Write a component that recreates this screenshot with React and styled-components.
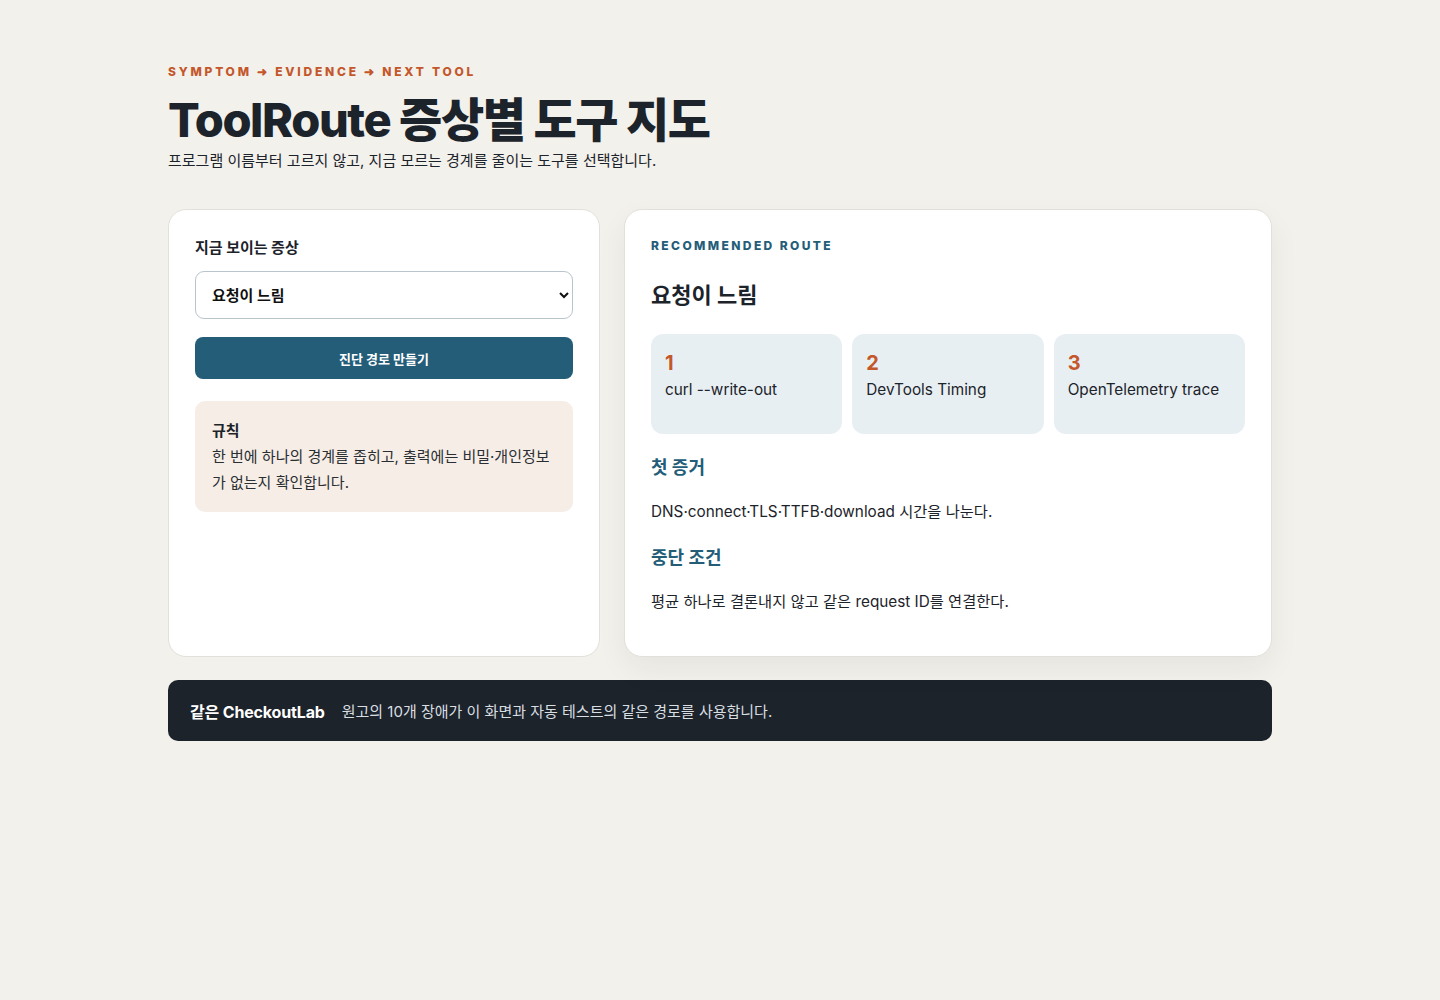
import React, { useState } from 'react';
import styled, { createGlobalStyle } from 'styled-components';

const GlobalStyle = createGlobalStyle`
  html, body {
    margin: 0;
    padding: 0;
    background: #f2f1ec;
  }
  body {
    font-family: Inter, "Noto Sans CJK KR", "Noto Sans", sans-serif;
    color: #1c232a;
  }
  * { box-sizing: border-box; }
`;

const Page = styled.main`
  max-width: 1104px;
  margin: 0 auto;
  padding: 63px 0 80px;
`;

const Eyebrow = styled.div`
  font-size: 12px;
  font-weight: 800;
  letter-spacing: ${(p) => p.spacing || '0.2em'};
  color: ${(p) => p.color || '#c4572a'};
  line-height: 18px;
  text-transform: uppercase;
`;

const Title = styled.h1`
  margin: 9px 0 0;
  font-size: 47px;
  font-weight: 800;
  letter-spacing: -0.03em;
  line-height: 60px;
`;

const Lead = styled.p`
  margin: 0;
  font-size: 15px;
  line-height: 22px;
  color: #1c232a;
`;

const Grid = styled.div`
  display: grid;
  grid-template-columns: 2fr 3fr;
  gap: 24px;
  margin-top: 37px;
`;

const Card = styled.section`
  background: #fff;
  border: 1px solid #e2e0da;
  border-radius: 18px;
  padding: ${(p) => (p.raised ? '27px 26px 26px' : '26px')};
  box-shadow: ${(p) => (p.raised ? '0 12px 30px rgba(28, 35, 42, 0.06)' : 'none')};
  min-height: 448px;
`;

const Label = styled.label`
  display: block;
  font-size: 15px;
  font-weight: 700;
  line-height: 24px;
  margin-bottom: 11px;
`;

const Select = styled.select`
  width: 100%;
  height: 48px;
  border: 1px solid #b9c5cc;
  border-radius: 9px;
  background: #fff;
  padding: 0 12px;
  font-family: inherit;
  font-size: 15px;
  font-weight: 700;
  color: #111;
`;

const Button = styled.button`
  display: block;
  width: 100%;
  height: 42px;
  margin-top: 18px;
  border: 0;
  border-radius: 8px;
  background: #245d78;
  color: #fff;
  font-family: inherit;
  font-size: 13px;
  font-weight: 700;
  cursor: pointer;
`;

const RuleBox = styled.div`
  margin-top: 22px;
  background: #f6ede6;
  border-radius: 10px;
  padding: 17px 17px 16px;
  font-size: 15px;
  line-height: 26px;
  color: #2a2f33;
`;

const RuleTitle = styled.strong`
  display: block;
  font-weight: 700;
  color: #1c232a;
`;

const RouteTitle = styled.h2`
  margin: 23px 0 0;
  font-size: 22px;
  font-weight: 700;
  line-height: 34px;
`;

const Steps = styled.div`
  display: grid;
  grid-template-columns: repeat(3, 1fr);
  gap: 10px;
  margin-top: 22px;
`;

const Step = styled.div`
  background: #e8eff3;
  border-radius: 12px;
  padding: 16px 14px;
  height: 100px;
`;

const StepNum = styled.div`
  font-size: 20px;
  font-weight: 700;
  color: #c4572a;
  line-height: 26px;
`;

const StepName = styled.div`
  font-size: 15.3px;
  line-height: 24px;
  margin-top: 2px;
`;

const SectionHead = styled.h3`
  margin: 20px 0 0;
  font-size: 18px;
  font-weight: 700;
  color: #245d78;
  line-height: 28px;
`;

const SectionText = styled.p`
  margin: 18px 0 0;
  font-size: 15.3px;
  line-height: 24px;
`;

const Footer = styled.footer`
  display: flex;
  align-items: center;
  gap: 17px;
  margin-top: 23px;
  height: 61px;
  padding: 0 22px;
  background: #1c232a;
  border-radius: 10px;
  color: #d9dee2;
  font-size: 15px;
`;

const FooterStrong = styled.strong`
  color: #fff;
  font-size: 16px;
  font-weight: 700;
  letter-spacing: -0.01em;
`;

const symptoms = {
  slow: {
    name: '요청이 느림',
    steps: ['curl --write-out', 'DevTools Timing', 'OpenTelemetry trace'],
    evidence: 'DNS·connect·TLS·TTFB·download 시간을 나눈다.',
    stop: '평균 하나로 결론내지 않고 같은 request ID를 연결한다.',
  },
};

export default function App() {
  const [key, setKey] = useState('slow');
  const s = symptoms[key];

  return (
    <>
      <GlobalStyle />
      <Page>
        <Eyebrow spacing="0.23em">Symptom ➜ Evidence ➜ Next tool</Eyebrow>
        <Title>ToolRoute 증상별 도구 지도</Title>
        <Lead>프로그램 이름부터 고르지 않고, 지금 모르는 경계를 줄이는 도구를 선택합니다.</Lead>

        <Grid>
          <Card>
            <Label htmlFor="symptom">지금 보이는 증상</Label>
            <Select id="symptom" value={key} onChange={(e) => setKey(e.target.value)}>
              <option value="slow">요청이 느림</option>
            </Select>
            <Button type="button">진단 경로 만들기</Button>
            <RuleBox>
              <RuleTitle>규칙</RuleTitle>
              한 번에 하나의 경계를 좁히고, 출력에는 비밀·개인정보가 없는지 확인합니다.
            </RuleBox>
          </Card>

          <Card raised>
            <Eyebrow color="#245d78">Recommended route</Eyebrow>
            <RouteTitle>{s.name}</RouteTitle>
            <Steps>
              {s.steps.map((name, i) => (
                <Step key={name}>
                  <StepNum>{i + 1}</StepNum>
                  <StepName>{name}</StepName>
                </Step>
              ))}
            </Steps>
            <SectionHead>첫 증거</SectionHead>
            <SectionText>{s.evidence}</SectionText>
            <SectionHead>중단 조건</SectionHead>
            <SectionText>{s.stop}</SectionText>
          </Card>
        </Grid>

        <Footer>
          <FooterStrong>같은 CheckoutLab</FooterStrong>
          <span>원고의 10개 장애가 이 화면과 자동 테스트의 같은 경로를 사용합니다.</span>
        </Footer>
      </Page>
    </>
  );
}
